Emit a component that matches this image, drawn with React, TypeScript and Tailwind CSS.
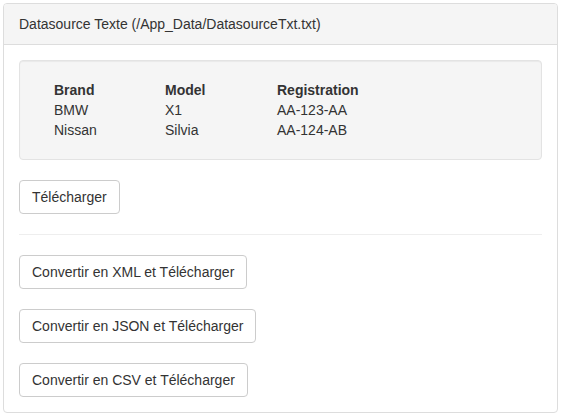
export default function App() {
  const rows = [
    { brand: 'BMW', model: 'X1', registration: 'AA-123-AA' },
    { brand: 'Nissan', model: 'Silvia', registration: 'AA-124-AB' },
  ]

  return (
    <div className="p-[3px] bg-white text-[14px] leading-[20px] text-[#333] font-['Liberation_Sans',Arial,sans-serif]">
      <div className="w-[555px] border border-[#ddd] rounded-[4px] bg-white">
        {/* Heading */}
        <div className="px-[15px] py-[10px] bg-[#f5f5f5] border-b border-[#ddd] rounded-t-[3px]">
          Datasource Texte (/App_Data/DatasourceTxt.txt)
        </div>

        {/* Body */}
        <div className="p-[15px]">
          <div className="mb-[20px] p-[19px] bg-[#f5f5f5] border border-[#e3e3e3] rounded-[4px] shadow-[inset_0_1px_1px_rgba(0,0,0,0.05)]">
            <table className="ml-[15px] border-collapse">
              <thead>
                <tr>
                  <th className="w-[111px] text-left font-bold p-0">Brand</th>
                  <th className="w-[112px] text-left font-bold p-0">Model</th>
                  <th className="text-left font-bold p-0">Registration</th>
                </tr>
              </thead>
              <tbody>
                {rows.map((r) => (
                  <tr key={r.registration}>
                    <td className="p-0">{r.brand}</td>
                    <td className="p-0">{r.model}</td>
                    <td className="p-0">{r.registration}</td>
                  </tr>
                ))}
              </tbody>
            </table>
          </div>

          <Button label="Télécharger" />

          <hr className="my-[20px] border-0 border-t border-[#eee]" />

          <div className="flex flex-col items-start gap-[20px]">
            <Button label="Convertir en XML et Télécharger" />
            <Button label="Convertir en JSON et Télécharger" />
            <Button label="Convertir en CSV et Télécharger" />
          </div>
        </div>
      </div>
    </div>
  )
}

function Button({ label }: { label: string }) {
  return (
    <button className="block px-[12px] py-[6px] text-[14px] leading-[20px] text-[#333] bg-white border border-[#ccc] rounded-[4px]">
      {label}
    </button>
  )
}
